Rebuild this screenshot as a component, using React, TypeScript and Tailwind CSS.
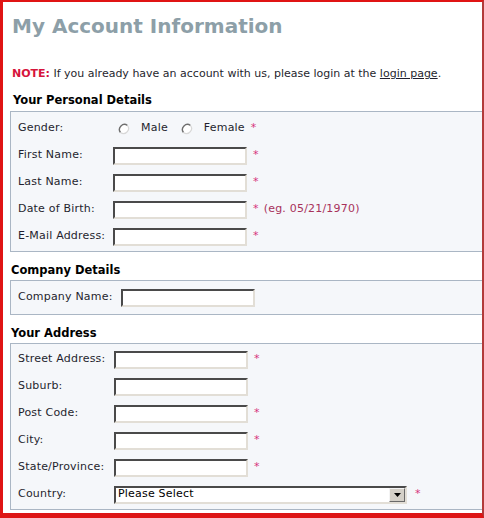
import type { ReactNode } from "react";

function Req() {
  return <span className="ml-[6px] text-[#d6337a]">*</span>;
}

function Field({ width = "w-[134px]" }: { width?: string }) {
  return (
    <div
      className={`h-[18px] ${width} border-2 border-t-[#4a4a4a] border-l-[#4a4a4a] border-r-[#e2ded6] border-b-[#e2ded6] bg-white`}
    />
  );
}

function Row({
  label,
  children,
  labelWidth = "w-[95px]",
}: {
  label: string;
  children: ReactNode;
  labelWidth?: string;
}) {
  return (
    <div className="flex h-[27px] items-center">
      <div className={`${labelWidth} shrink-0`}>{label}</div>
      {children}
    </div>
  );
}

function Radio() {
  return (
    <svg width="12" height="12" viewBox="0 0 12 12" className="shrink-0">
      <circle cx="6" cy="6" r="5" fill="#fff" />
      <path d="M2.5 9.5 A5 5 0 0 1 9.5 2.5" fill="none" stroke="#6e6e6e" strokeWidth="1.4" />
      <path d="M9.5 2.5 A5 5 0 0 1 2.5 9.5" fill="none" stroke="#d8d8d8" strokeWidth="1.2" />
    </svg>
  );
}

function Heading({ children, indent = "pl-[1px]" }: { children: ReactNode; indent?: string }) {
  return (
    <div className={`flex h-[18px] items-center ${indent} text-[11.5px] font-bold text-black`}>
      {children}
    </div>
  );
}

export default function App() {
  return (
    <div className="h-[518px] w-[484px] overflow-hidden bg-white font-['DejaVu_Sans',sans-serif] text-[11px] text-[#1f1f2e]">
      <div className="h-[518px] border-b-[5px] border-l-[3px] border-r-[2px] border-t-[2px] border-b-[#dd1515] border-l-[#e01414] border-r-[#b23a3a] border-t-[#e01414]">
        <div className="pl-[9px] pr-0">
          <div className="pt-[10px] text-[20px] font-bold leading-[28px] text-[#8d9fa8]">
            My Account Information
          </div>

          <div className="mt-[27px] leading-[14px]">
            <span className="font-bold text-[#d6143c]">NOTE:</span> If you already have an account
            with us, please login at the <span className="underline">login page</span>.
          </div>

          <div className="mt-[11px]">
            <Heading indent="pl-[1px]">Your Personal Details</Heading>
          </div>

          <div className="-ml-[2px] mt-[1px] border border-r-0 border-[#aab6c4] bg-[#f5f7fa] pb-[1px] pl-[7px] pt-[3px] tracking-[0.2px]">
            <div className="flex h-[27px] items-center">
              <div className="w-[95px] shrink-0">Gender:</div>
              <div className="ml-[5px] flex items-center">
                <Radio />
                <span className="ml-[11px]">Male</span>
                <span className="ml-[13px]">
                  <Radio />
                </span>
                <span className="ml-[11px]">Female</span>
                <Req />
              </div>
            </div>
            <Row label="First Name:">
              <Field />
              <Req />
            </Row>
            <Row label="Last Name:">
              <Field />
              <Req />
            </Row>
            <Row label="Date of Birth:">
              <Field />
              <Req />
              <span className="ml-[5px] text-[#a8325a]">(eg. 05/21/1970)</span>
            </Row>
            <Row label="E-Mail Address:">
              <Field />
              <Req />
            </Row>
          </div>

          <div className="mt-[10px]">
            <Heading indent="-ml-[1px]">Company Details</Heading>
          </div>
          <div className="-ml-[2px] border border-r-0 border-[#aab6c4] bg-[#f5f7fa] pb-[3px] pl-[7px] pt-[3px] tracking-[0.2px]">
            <div className="flex h-[27px] items-center">
              <span>Company Name:</span>
              <span className="ml-[8px]">
                <Field />
              </span>
            </div>
          </div>

          <div className="mt-[10px]">
            <Heading indent="-ml-[1px]">Your Address</Heading>
          </div>
          <div className="-ml-[2px] border border-r-0 border-[#aab6c4] bg-[#f5f7fa] pb-[1px] pl-[7px] pt-[2px] tracking-[0.2px]">
            <Row label="Street Address:" labelWidth="w-[96px]">
              <Field />
              <Req />
            </Row>
            <Row label="Suburb:" labelWidth="w-[96px]">
              <Field />
            </Row>
            <Row label="Post Code:" labelWidth="w-[96px]">
              <Field />
              <Req />
            </Row>
            <Row label="City:" labelWidth="w-[96px]">
              <Field />
              <Req />
            </Row>
            <Row label="State/Province:" labelWidth="w-[96px]">
              <Field />
              <Req />
            </Row>
            <Row label="Country:" labelWidth="w-[96px]">
              <div className="flex h-[18px] w-[293px] items-center border-2 border-b-[#e2ded6] border-l-[#4a4a4a] border-r-[#e2ded6] border-t-[#4a4a4a] bg-white">
                <span className="flex-1 pl-[2px] text-black">Please Select</span>
                <div className="flex h-[14px] w-[16px] items-center justify-center border border-b-[#6a6a6a] border-l-[#f4f4f4] border-r-[#6a6a6a] border-t-[#f4f4f4] bg-[#d4d0c8]">
                  <svg width="7" height="4" viewBox="0 0 7 4">
                    <path d="M0 0 H7 L3.5 4 Z" fill="#000" />
                  </svg>
                </div>
              </div>
              <span className="ml-[8px] text-[#d6337a]">*</span>
            </Row>
          </div>
        </div>
      </div>
    </div>
  );
}
